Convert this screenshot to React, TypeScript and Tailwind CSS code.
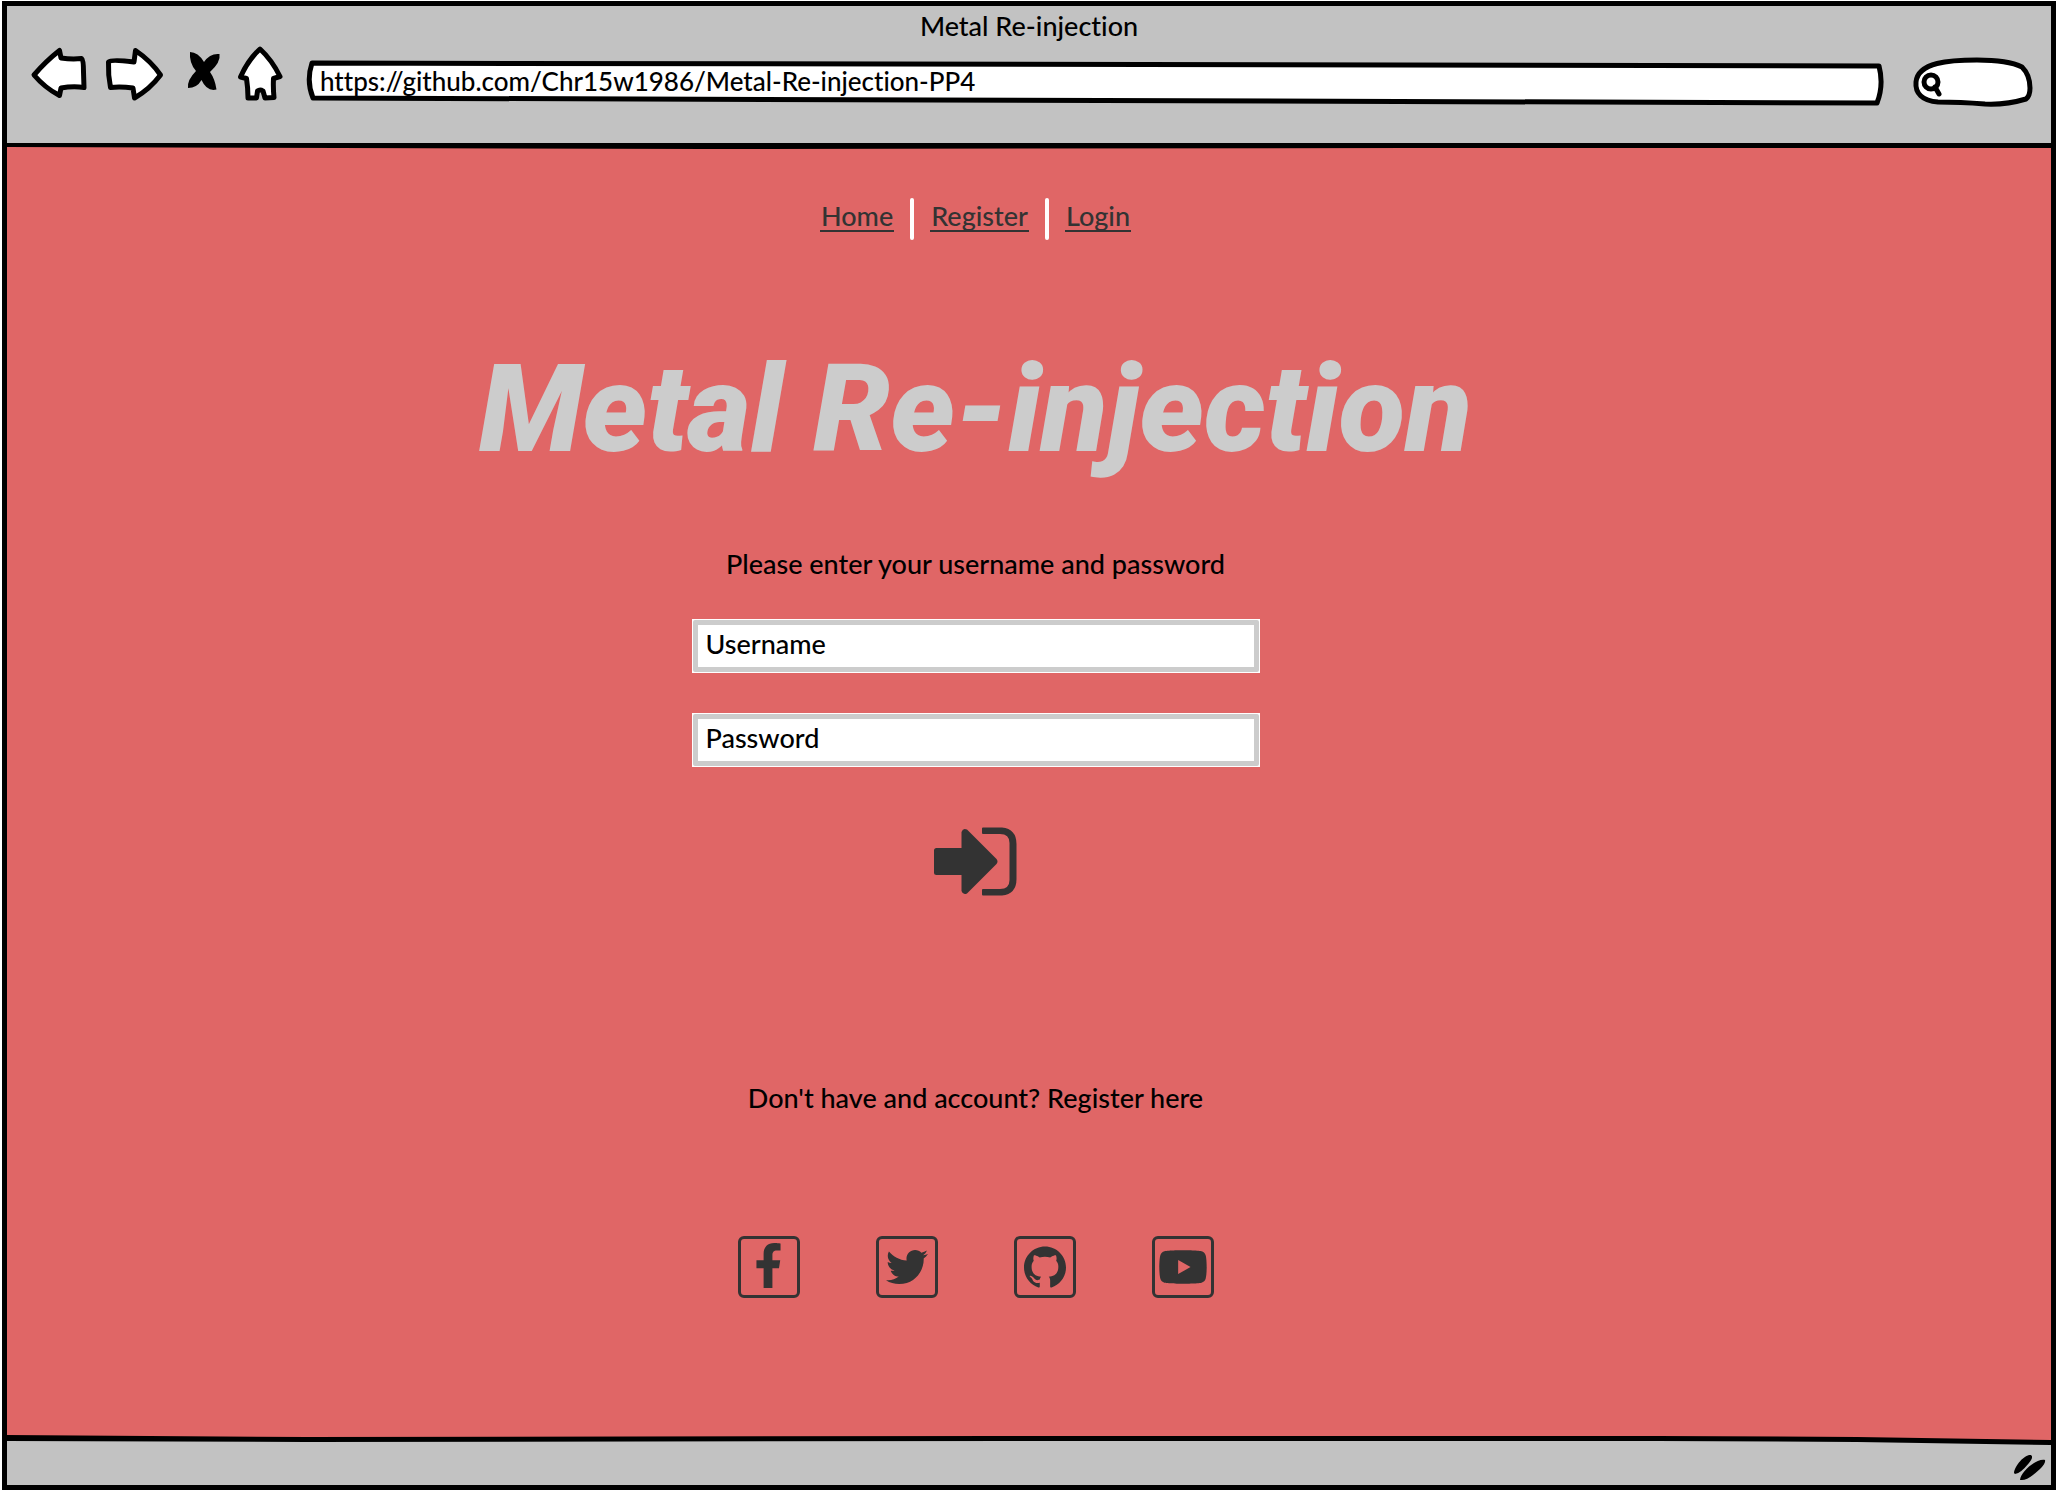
import React from "react";
import { FaFacebookF, FaTwitter, FaYoutube } from "react-icons/fa";
import { SiGithub } from "react-icons/si";

const sketch = {
  stroke: "#000",
  strokeWidth: 5,
  strokeLinejoin: "round" as const,
  strokeLinecap: "round" as const,
  fill: "#fff",
};

function BackIcon() {
  return (
    <svg className="h-16 w-15" viewBox="30 45 60 64" {...sketch}>
      <path d="M34 75 Q46 61 59.500 50.500 L61 58 Q72 59.500 81.500 58.500 Q83.500 60 83.500 72 L84 87.500 Q73 86 61 88 L59.500 95.500 Q45 88 34 75Z" />
    </svg>
  );
}

function ForwardIcon() {
  return (
    <svg className="h-16 w-16" viewBox="102 45 64 64" {...sketch}>
      <path d="M108.500 62 Q111 59 134 62 L135.500 50.500 Q151 61 160.500 75 Q150 89 134.500 98 L133 88 Q121 86.500 110.500 87.500 Q108 75 108.500 62Z" />
    </svg>
  );
}

function StopIcon() {
  return (
    <svg className="h-16 w-[46px]" viewBox="178 45 46 64" fill="#000">
      <path d="M190 52 Q198 52 204 62 Q210 53 219.500 54 Q221 62 210 72 Q215 79 216.500 89.500 Q207 92 201.500 80 Q197 88 188 88 Q187 80 196 71 Q189 63 190 52Z" />
    </svg>
  );
}

function HomeIcon() {
  return (
    <svg className="h-16 w-12" viewBox="236 45 48 64" {...sketch}>
      <path d="M260 49 Q272 60 280 76.500 L273.500 78.500 Q273 88 274 97.500 L265 98 L263 91 Q260 89 257.500 91 L256.500 98 L248 98 Q248 88 246.500 78.500 L240.500 77 Q248 60 260 49Z" />
    </svg>
  );
}

function LoginIcon() {
  return (
    <svg className="h-[69px] w-[83px]" viewBox="934 828 83 69" fill="#333">
      <path d="M936.500 849H961.500V833Q963 828.500 967 830.500L996.500 860Q998.500 862.500 996.500 865L967 894.500Q963 896.500 961.500 892V876H936.500Q934 876 934 873.500V851.500Q934 849 936.500 849Z" />
      <path d="M983 828.500H1002Q1016.500 830 1016.500 845V880Q1016.500 895 1002 896.500H983Q982 896.500 982 895.500V891Q982 890 983 890H1000Q1009.500 890 1009.500 881V844Q1009.500 835 1000 835H983Q982 835 982 834V829.500Q982 828.500 983 828.500Z" />
    </svg>
  );
}

function Field({ id, label, type }: { id: string; label: string; type: string }) {
  return (
    <div className="w-full bg-white p-px">
      <input
        id={id}
        type={type}
        aria-label={label}
        placeholder={label}
        className="block h-[52px] w-full rounded-xs border-5 border-[#ccc] bg-white pr-2 pb-1.5 pl-2 placeholder:text-black placeholder:opacity-100 outline-none"
      />
    </div>
  );
}

const links = ["Home", "Register", "Login"];

const socials = [
  { name: "Facebook", icon: <FaFacebookF className="mb-1 size-[45px]" /> },
  { name: "Twitter", icon: <FaTwitter className="size-[42px]" /> },
  { name: "GitHub", icon: <SiGithub className="size-[42px]" /> },
  { name: "YouTube", icon: <FaYoutube className="size-[50px]" /> },
];

export default function App() {
  return (
    <div className="flex min-h-screen flex-col bg-white px-0.5 pt-px pb-1 font-['Lato',sans-serif] text-[27px] leading-8 font-medium text-black [font-variant-ligatures:none]">
      <div className="flex flex-1 flex-col border-5 border-black bg-[#c2c2c2]">
        <header>
          <div className="h-[39px] pt-1 text-center">Metal Re-injection</div>
          <div className="flex gap-5 pr-[15px] pb-[34px] pl-[23px]">
            <nav className="flex gap-3" aria-label="Browser">
              <button aria-label="Back"><BackIcon /></button>
              <button aria-label="Forward"><ForwardIcon /></button>
              <button aria-label="Stop"><StopIcon /></button>
              <button aria-label="Home page"><HomeIcon /></button>
            </nav>
            <div className="relative flex-1">
              <svg className="absolute inset-0 h-16 w-full" viewBox="0 0 1586 64" preserveAspectRatio="none" {...sketch}>
                <path d="M8 18 L1575 21 Q1580 40 1573 58 L9 53 Q2 36 8 18Z" />
              </svg>
              <input
                aria-label="Address"
                defaultValue="https://github.com/Chr15w1986/Metal-Re-injection-PP4"
                className="relative mt-4 block h-10 w-full bg-transparent px-4 text-[26px] outline-none"
              />
            </div>
            <div className="relative w-[126px]">
              <svg className="absolute inset-0 h-16 w-full" viewBox="1910 45 126 64" {...sketch}>
                <path d="M1938 102 C1922 101 1915 93 1916 82 C1918 62 1950 60 1977 60 C1997 60 2012 62 2022 67 C2028 73 2030 82 2030 88 Q2030 96 2026 99 Q2006 105 1985 104 Q1960 102 1938 102Z" />
                <circle cx="1931" cy="82" r="7" />
                <path d="M1935 87 L1939 94" />
              </svg>
              <input aria-label="Search" className="relative mt-4 ml-9 block h-9 w-20 bg-transparent outline-none" />
            </div>
          </div>
          <svg className="block h-1.5 w-full bg-[#e06666]" viewBox="0 0 2044 6" preserveAspectRatio="none">
            <path d="M0 0H2044V5H1400L700 6L0 4Z" />
          </svg>
        </header>

        <main className="flex flex-1 flex-col items-center bg-[#e06666] pr-[107px] pt-[49px]">
          <nav className="flex items-center gap-4 text-[#333]" aria-label="Main">
            {links.map((l, i) => (
              <React.Fragment key={l}>
                {i > 0 && <span className="h-[42px] w-1 rounded-xs bg-white" />}
                <a href="#" className="mb-1 border-b-2 border-[#333] px-px leading-7">{l}</a>
              </React.Fragment>
            ))}
          </nav>
          <h1 className="mt-[100px] font-['Roboto',sans-serif] text-[122px] leading-[140px] font-black text-[#ccc] italic">Metal Re-injection</h1>
          <form className="flex w-[568px] flex-col items-center" onSubmit={(e) => e.preventDefault()}>
            <p className="mt-[68px] mb-[39px]">Please enter your username and password</p>
            <Field id="username" label="Username" type="text" />
            <div className="h-10" />
            <Field id="password" label="Password" type="password" />
            <button aria-label="Log in" className="mt-[60px]"><LoginIcon /></button>
          </form>
          <p className="mt-[186px]">
            Don't have and account? <a href="#">Register here</a>
          </p>
          <div className="mt-[122px] flex gap-[76px]">
            {socials.map((s) => (
              <a
                key={s.name}
                href="#"
                aria-label={s.name}
                className="flex size-[62px] items-center justify-center rounded-md border-3 border-[#333] text-[#333]"
              >
                {s.icon}
              </a>
            ))}
          </div>
        </main>

        <footer>
          <svg className="block h-2.5 w-full" viewBox="0 0 2044 10" preserveAspectRatio="none">
            <path fill="#e06666" d="M0 0H2044V6H0Z" />
            <path d="M0 0L300 2L1000 1L1650 1L1850 2L2044 5V10L1850 7L1650 6L1000 6L300 7L0 6Z" />
          </svg>
          <div className="flex h-10 justify-end pt-2 pr-1">
            <svg className="h-7 w-9" viewBox="2012 1454 36 28">
              <path d="M2015 1474 C2016 1466 2026 1455 2032 1456 Q2035 1458 2030 1464 Q2021 1475 2016 1475Z" />
              <path d="M2021 1481 C2022 1472 2038 1459 2046 1461 Q2047 1464 2041 1470 Q2028 1482 2022 1481Z" />
            </svg>
          </div>
        </footer>
      </div>
    </div>
  );
}
